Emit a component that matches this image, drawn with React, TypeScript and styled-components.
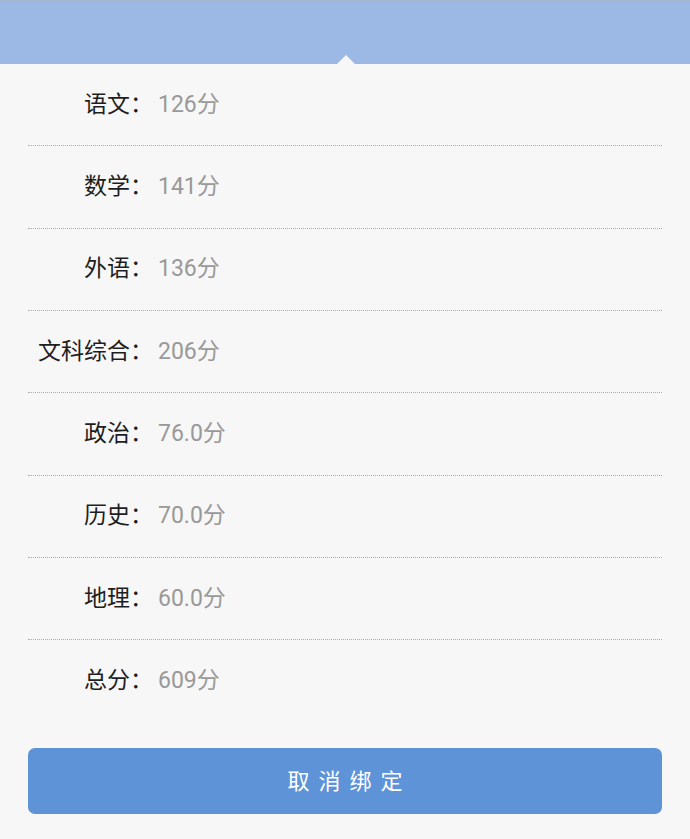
import React from "react";
import styled, { createGlobalStyle } from "styled-components";

const Global = createGlobalStyle`
  html, body { margin: 0; padding: 0; background: #f7f7f7; }
  body { font-family: Roboto, "Noto Sans CJK SC", sans-serif; }
`;

const Page = styled.div`
  width: 690px;
  height: 839px;
  background: #f7f7f7;
  display: flex;
  flex-direction: column;
  overflow: hidden;
`;

const Header = styled.div`
  position: relative;
  height: 64px;
  flex: none;
  background: #9bb9e4;
  border-top: 2px solid #a4b6cf;
  box-sizing: border-box;
`;

const Pointer = styled.div`
  position: absolute;
  left: 337px;
  bottom: 0;
  width: 0;
  height: 0;
  border-left: 9px solid transparent;
  border-right: 9px solid transparent;
  border-bottom: 9px solid #f7f7f7;
`;

const List = styled.div`
  display: flex;
  flex-direction: column;
  padding: 0 28px;
`;

const Row = styled.div<{ $divider: boolean }>`
  height: 82.33px;
  box-sizing: border-box;
  display: flex;
  align-items: center;
  border-bottom: ${(p) => (p.$divider ? "1px dotted #a9a9a9" : "none")};
  padding-bottom: 6px;
`;

const Label = styled.span`
  width: 125px;
  text-align: right;
  font-family: "Noto Sans CJK SC", sans-serif;
  font-size: 23px;
  color: #1e1e1e;
  white-space: nowrap;
`;

const Value = styled.span`
  margin-left: 5px;
  font-family: Roboto, "Noto Sans CJK SC", sans-serif;
  font-size: 23px;
  color: #999999;
`;

const Footer = styled.div`
  padding: 25px 28px 0;
`;

const Button = styled.button`
  width: 100%;
  height: 66px;
  border: none;
  border-radius: 7px;
  background: #5f93d8;
  color: #ffffff;
  font-family: "Noto Sans CJK SC", sans-serif;
  font-size: 22px;
  letter-spacing: 9px;
  padding: 0 0 4px 9px;
  display: flex;
  align-items: center;
  justify-content: center;
`;

const scores: [string, string][] = [
  ["语文", "126分"],
  ["数学", "141分"],
  ["外语", "136分"],
  ["文科综合", "206分"],
  ["政治", "76.0分"],
  ["历史", "70.0分"],
  ["地理", "60.0分"],
  ["总分", "609分"],
];

export default function App() {
  return (
    <Page>
      <Global />
      <Header>
        <Pointer />
      </Header>
      <List>
        {scores.map(([k, v], i) => (
          <Row key={k} $divider={i < scores.length - 1}>
            <Label>{k}：</Label>
            <Value>{v}</Value>
          </Row>
        ))}
      </List>
      <Footer>
        <Button>取消绑定</Button>
      </Footer>
    </Page>
  );
}
